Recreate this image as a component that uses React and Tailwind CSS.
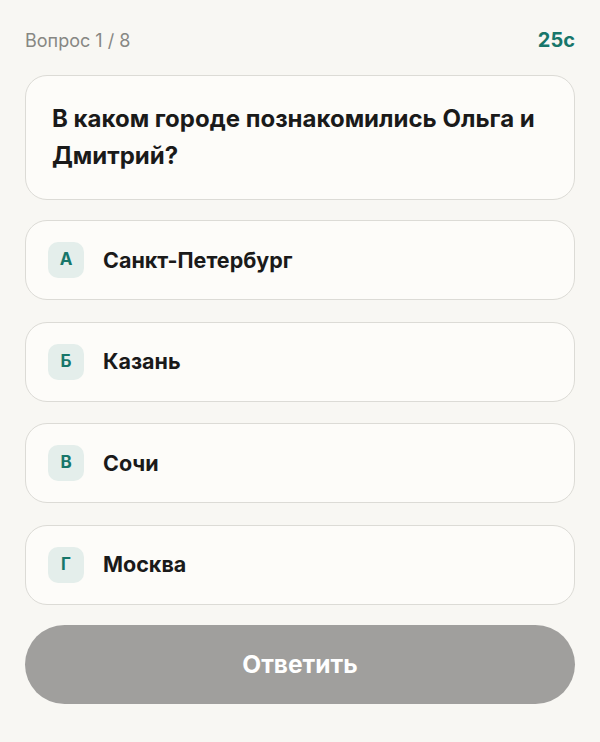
import React, { useState } from "react";

const options = [
  { key: "А", label: "Санкт-Петербург" },
  { key: "Б", label: "Казань" },
  { key: "В", label: "Сочи" },
  { key: "Г", label: "Москва" },
];

const App = () => {
  const [selected, setSelected] = useState(null);

  return (
    <div className="min-h-[742px] w-[600px] bg-[#f8f7f3] px-[25px] pt-[28px] font-['Inter',sans-serif]">
      <div className="flex items-center justify-between h-[24px]">
        <span className="text-[18px] text-[#878783]">Вопрос 1 / 8</span>
        <span className="text-[20px] font-bold text-[#17766a]">25с</span>
      </div>

      <div className="mt-[23px] h-[125px] rounded-[22px] border border-[#dcdbd6] bg-[#fdfcf9] px-[26px] pt-[24px]">
        <h2 className="text-[24px] font-bold leading-[37px] text-[#1a1a1a]">
          В каком городе познакомились Ольга и Дмитрий?
        </h2>
      </div>

      <div className="mt-[20px] flex flex-col gap-[21.5px]">
        {options.map((o) => (
          <button
            key={o.key}
            onClick={() => setSelected(o.key)}
            className={
              "flex h-[80px] items-center gap-[19px] rounded-[22px] border bg-[#fdfcf9] px-[22px] text-left " +
              (selected === o.key ? "border-[#17766a]" : "border-[#dcdbd6]")
            }
          >
            <span className="flex h-[36px] w-[36px] items-center justify-center rounded-[10px] bg-[#e4eeeb] text-[17px] font-bold text-[#17766a]">
              {o.key}
            </span>
            <span className="text-[21.5px] font-bold text-[#1a1a1a]">{o.label}</span>
          </button>
        ))}
      </div>

      <button className="mt-[20.5px] flex h-[79px] w-full items-center justify-center rounded-full bg-[#a09f9d] text-[24.5px] font-bold text-white">
        Ответить
      </button>
    </div>
  );
};

export default App;
